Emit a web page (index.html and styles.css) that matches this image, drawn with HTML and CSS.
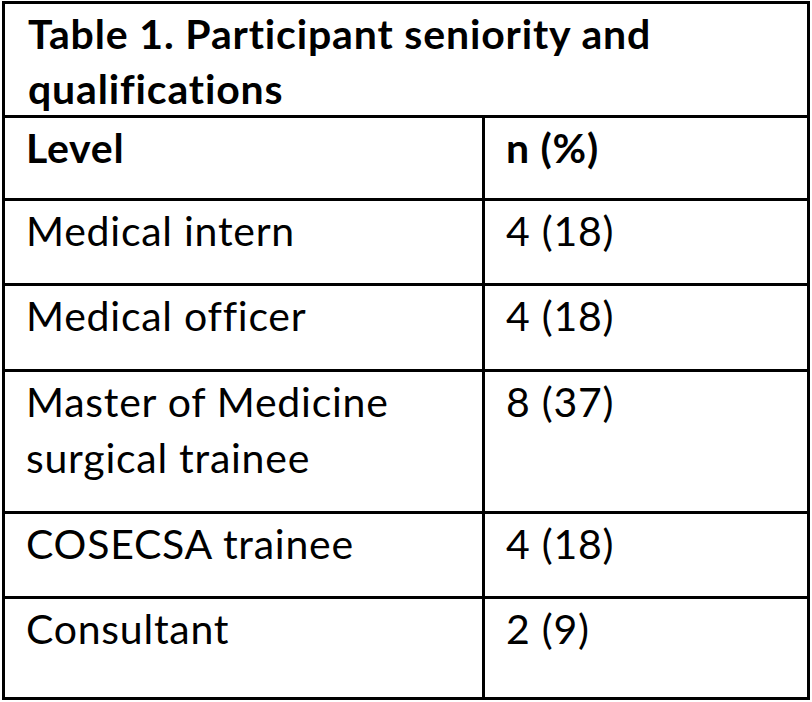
FILE: index.html
```html
<!DOCTYPE html>
<html lang="en">
<head>
<meta charset="utf-8">
<title>Table 1. Participant seniority and qualifications</title>
<link rel="stylesheet" href="styles.css">
</head>
<body>
<div class="tbl">
  <div class="cell title">Table 1. Participant seniority and<br>qualifications</div>
  <div class="cell head">Level</div>
  <div class="cell head">n (%)</div>
  <div class="cell">Medical intern</div>
  <div class="cell">4 (18)</div>
  <div class="cell">Medical officer</div>
  <div class="cell">4 (18)</div>
  <div class="cell">Master of Medicine<br>surgical trainee</div>
  <div class="cell">8 (37)</div>
  <div class="cell">COSECSA trainee</div>
  <div class="cell">4 (18)</div>
  <div class="cell">Consultant</div>
  <div class="cell">2 (9)</div>
</div>
</body>
</html>
```

FILE: styles.css
```css
html, body {
  margin: 0;
  padding: 0;
  background: #fff;
}

body {
  font-family: Lato, "Open Sans", "Liberation Sans", sans-serif;
  color: #000;
}

.tbl {
  margin: 1px 0 0 2px;
  width: 808px;
  box-sizing: border-box;
  border-left: 3px solid #000;
  border-top: 3px solid #000;
  display: grid;
  grid-template-columns: 480px 325px;
  grid-template-rows: 114px 83px 85px 86px 142px 85px 101px;
}

.cell {
  box-sizing: border-box;
  border-right: 3px solid #000;
  border-bottom: 3px solid #000;
  padding: 2px 0 0 21px;
  font-size: 41px;
  line-height: 56px;
  letter-spacing: 0.75px;
}

.title {
  grid-column: 1 / span 2;
  font-weight: 700;
  line-height: 55px;
  padding-top: 2px;
  padding-left: 23px;
  letter-spacing: 0.85px;
}

.head {
  font-weight: 700;
}
```
